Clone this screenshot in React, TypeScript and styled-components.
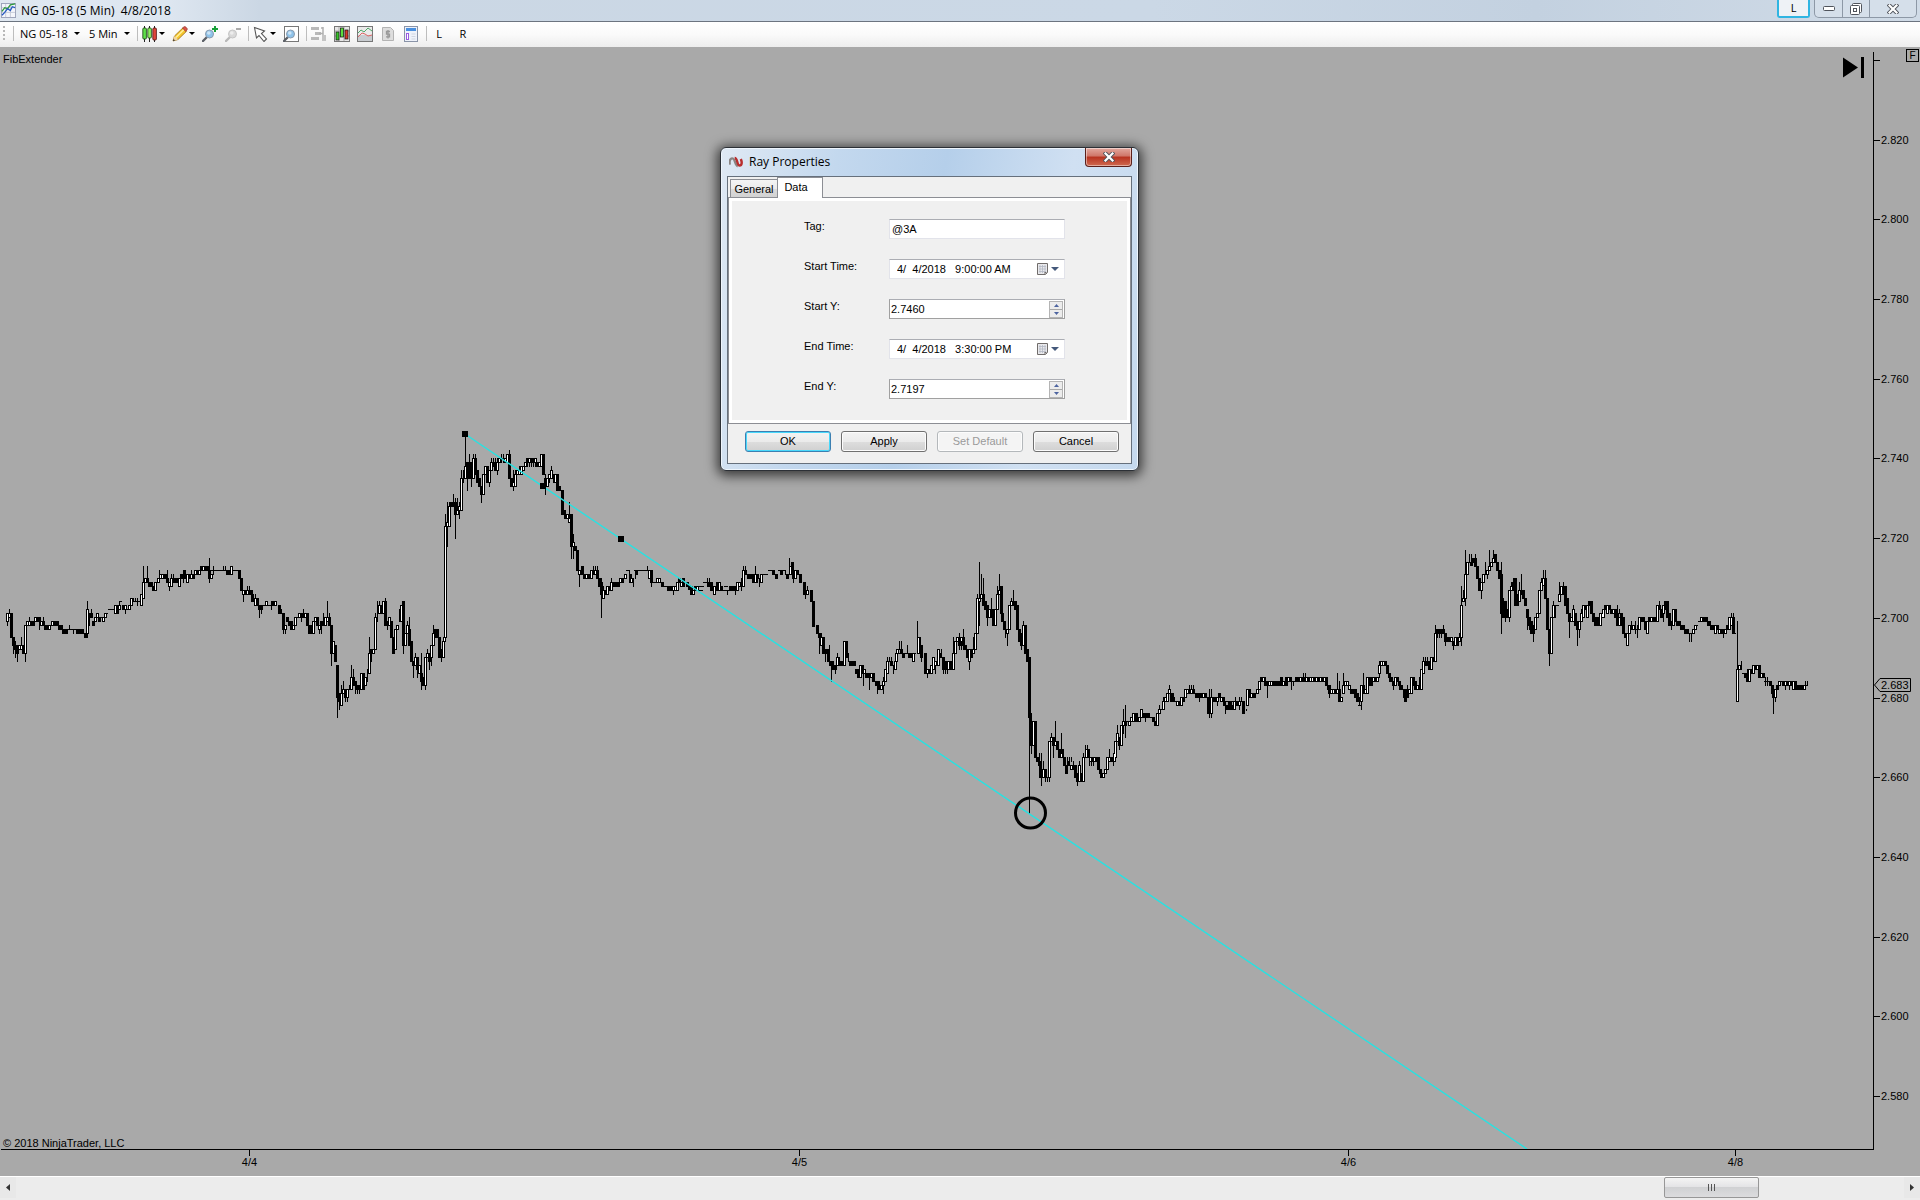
import React from "react";
import styled, { createGlobalStyle } from "styled-components";

const UI_FONT = '"Open Sans", "Noto Sans", sans-serif';
const FORM_FONT = '"Liberation Sans", Arial, sans-serif';

const GlobalStyle = createGlobalStyle`
  *, *::before, *::after { box-sizing: border-box; }
  html, body { margin: 0; }
  body { font-family: ${FORM_FONT}; font-size: 11px; color: #000; overflow: hidden; }
  button, input { font: inherit; color: inherit; margin: 0; }
  svg { display: block; }
`;

/* ---------- price series ----------
   Each block lists its marks on a grid of thirds of a pixel, from its own origin:
   U x,top,bottom        hollow (rising) candle
   D x,top,bottom[,x2]   filled (falling) candle, or a run of them up to x2
   W x,top,bottom        wick
   H x,y,x2              flat bars                                   */
type Block = { x: number; y: number; marks: string };

const BLOCKS: Block[] = [
  {
    x: 0,
    y: 540,
    marks: `U22,220,244 W22,244,255 W28,207,220 U28,220,232 D34,220,292 D40,292,316 W40,316,340 D46,316,328 W46,304,352 D52,328,340 W52,316,364
    U58,316,328 U64,316,328 W64,292,316 D70,316,340 U76,256,340 W76,340,364 U82,244,256 W88,231,244 U88,244,256 D94,244,256,100 U106,232,244
    D112,232,244,118 W118,244,268 U124,244,256 D130,244,256 W130,231,244 D136,256,268,142 U148,256,268 U156,244,256 D160,244,256,172 D178,256,268,184
    H178,268,234 D190,268,280,200 W208,255,268 W220,268,280 D232,268,280,244 W250,268,280 D256,280,292,260 U262,208,280 W262,183,208 D268,220,232,274
    W268,232,256 W274,208,220 D280,244,256 U286,232,244 U292,220,232 D298,232,244 H298,232,316 U310,232,244 U316,220,232 H316,220,326 H326,208,343
    U346,196,220 D352,196,220 U358,196,208 W358,184,196 H358,184,368 D370,196,208 U376,196,208 W376,208,220 H376,208,388 U388,196,208 U394,176,196
    H394,184,424 W400,176,184 W406,176,184 W412,176,196 U424,164,196 U430,128,176 W430,78,128 U436,116,128 D442,116,128 W442,78,116 D448,128,140,454
    D460,140,152 U466,128,152 H466,128,474 U474,116,128 W478,91,104 U480,104,116 U486,104,116 D490,104,116,500 W502,91,116 D502,116,128 U508,128,140
    W508,140,152 U514,116,140 W514,104,116 W520,104,116 D524,116,128,530 U538,116,140 D544,104,116 D553,92,116 W550,116,128 U562,104,128 D568,104,116
    U574,104,116 D580,104,116 W574,91,104 U586,92,104 D592,92,104 U598,92,104 D604,80,92 U610,80,92 D616,80,92,622 D628,92,116 W628,54,128 U634,104,116
    H634,92,682 W640,80,104 W670,78,92 W676,78,92 D682,92,104,690 U694,80,104 H694,92,718 D718,92,116 D724,116,152 U730,152,164 W730,164,185 D736,152,164
    U742,152,164 W742,139,152 W748,139,152 D748,152,164,754 D757,164,184 U766,176,196 W766,162,176 D772,176,196 D778,196,208,784 W778,208,232 W784,208,220
    H784,196,830 U798,184,196 H798,184,806 D816,184,196,820 W814,196,208 U826,184,196 D838,196,220 W844,208,220 D850,220,268 W850,268,280 U856,256,268
    W856,268,280 D862,232,244 D868,244,256 D874,244,268 U880,256,268 U886,232,256 H886,232,898 U898,220,232 D904,220,232,910 W910,207,220 W904,232,244
    U916,220,232 D922,220,256 D928,256,280`,
  },
  {
    x: 310,
    y: 420,
    marks: `D2,616,640 U10,604,640 U16,592,604 D22,592,616 U28,616,628 W28,628,640 W34,604,640 D34,604,616,40 W40,580,604 U46,592,616 W52,544,592 U52,592,604
    W58,580,592 D58,592,616 D64,616,700 W64,700,736 U70,664,700 D76,676,724 D82,736,832 W82,832,892 D88,820,844 W88,844,868 U94,820,856 W94,796,820
    U100,808,820 W100,784,808 D106,808,832 W106,832,844 U112,808,832 W112,832,844 W118,796,808 H112,808,124 U124,772,808 W124,736,772 D130,772,796
    W130,748,772 W136,796,820 D136,784,796 D142,796,808 W142,808,820 W148,796,820 U154,760,808 D160,760,808 U166,772,796 W172,748,784 H166,772,176
    U178,700,760 W178,652,700 D184,688,700 U190,688,700 W184,700,724 U196,592,688 W196,580,592 W202,544,604 H196,592,206 U208,556,580 W208,544,556
    D214,556,580 U220,544,580 D226,544,616 W226,536,544 D232,604,616 W232,616,628 U238,592,616 D244,604,652 D250,652,700 U256,628,688 U262,616,628
    W268,568,604 U274,556,604 D280,544,676 W280,676,700 U286,640,676 U292,616,640 W292,604,616 W298,592,640 D298,628,676 D304,664,724 D310,724,736
    W310,736,772 U316,712,736 W316,700,712 D322,712,748 W322,748,772 U328,736,760 W334,700,760 D334,760,784 W334,784,808 D340,772,796 U346,712,796
    W346,796,808 W352,688,700 U352,700,712 D358,700,724 W358,724,748 U364,676,712 W364,712,736 U370,640,676 W370,616,640 D376,628,652,382 D388,652,712
    D394,688,712 W394,712,724 U400,664,712 U403,652,664 U406,320,652 W406,283,320 U412,308,320 W412,248,380 U418,260,320 W418,248,260 D424,248,260,430
    W430,223,248 D436,248,284 W436,235,356 U442,272,284 W442,235,272 U448,260,272 W448,248,296 U454,176,272 W454,152,176 W460,152,188 U466,140,176
    W466,44,140 D472,128,164 W472,164,212 D478,128,176 W478,103,128 D484,128,176 W484,176,200 U490,116,176 W490,103,116 W496,103,128 D496,116,164
    D502,152,188 D508,176,200 D514,200,224 W514,224,248 U520,164,224 U526,140,164 D532,140,188 U538,152,188 W538,188,200 U544,128,152 W544,116,128
    D550,128,140 W550,116,128 W556,116,128 D556,128,152 U562,128,152 W562,116,164 U568,116,128 H568,116,580 W574,104,128 W580,104,128 U586,116,128
    U592,104,128 W598,91,104 D598,104,176 D604,176,200 U610,188,200 W610,152,212 U616,164,200 W616,152,164 U622,152,164 W628,140,164 U628,152,164
    U634,140,164 U640,140,152 U646,128,140 D652,116,128 U658,116,128 D664,116,128 D670,116,128 U676,116,128 W652,128,140 W658,128,140 W664,128,140
    W670,128,140 W676,128,140 D682,128,140 U688,128,140 U694,104,140 D700,104,164 W706,164,224 D706,176,200 U712,176,200 U718,164,176 W718,176,188
    U724,152,176 W724,139,152 D730,164,176 W730,176,188 U736,164,188 D742,164,212 D748,200,212 D757,212,284 D762,272,284 D766,284,296 U772,284,296
    W778,248,308 U778,296,308 D784,284,380 W784,380,416 U790,368,380 W790,344,416 D796,380,392 D802,392,452 U808,452,464 W808,464,500 D817,440,464
    D823,464,476 U829,464,476 D835,464,476 D841,464,476 U844,452,476 D850,452,464 U856,452,464 W850,440,452 W856,440,452 W862,440,464 D862,452,476
    D868,476,500`,
  },
  {
    x: 600,
    y: 520,
    marks: `D4,188,224 W4,176,293 U10,212,236 W10,200,212 D16,212,224 U22,200,224 D28,200,212 U34,188,212 W34,175,188 D40,188,200,56 U62,176,188 D68,176,188
    U76,164,176 H78,152,88 W88,152,176 D90,164,188 U94,176,188 D98,176,188 W100,188,200 H102,152,160 D110,152,164 W106,164,176 W142,139,152 U148,152,176
    H110,152,154 D154,152,188 W154,188,200 H154,188,190 U172,176,188 U178,176,188 D188,188,200 H188,200,220 D206,200,212,214 U220,200,212 W220,212,224
    U226,200,212 U232,188,212 D238,176,188 U244,188,200 D250,176,200 D262,188,200 D268,196,208 D274,200,224 U280,212,224 D286,200,212 U292,200,212
    H292,212,310 H298,200,314 H310,188,330 W322,176,188 D326,188,200 W328,176,188 D334,188,212 U344,200,224 W352,188,200 D352,188,212 U358,188,212
    D364,200,212 H372,200,386 W382,212,224 H370,212,400 D392,200,212,404 W406,212,224 U412,188,212 U418,188,200 W424,176,212 U430,152,200 W430,139,152
    D436,152,164 W436,139,152 W442,164,176 D448,164,176 D454,164,176 D460,164,188 W466,139,164 U466,164,188 D472,164,176 W472,176,188 U484,164,188
    W478,176,200 H484,164,506 H504,152,524 D520,152,164 D530,164,176 H536,152,560 D544,152,164 W556,152,164 D562,164,176 U570,140,164 W568,115,140
    D576,128,152 W580,128,188 D579,152,176 U586,152,176 D592,152,164 D602,164,188 D614,188,224 W616,224,236 U622,212,224 W622,200,212 D634,212,244
    D640,244,320 D652,316,340 D658,340,352 W658,352,400 W664,340,352 U664,352,376 D670,352,400 D676,388,400 W676,400,424 D686,388,424 W688,376,388
    D692,424,436 D698,424,448 W694,448,484 D706,436,448 W706,448,460 U712,412,436 W712,400,412 W718,412,424 D718,424,436 D724,424,436 U732,364,436
    D738,364,412 W745,400,424 D750,424,436 D756,424,436,762 D768,448,460 D774,448,472 U780,436,472 D786,436,460 W790,460,496 U792,448,460 D798,460,472
    D804,460,472 W808,472,508 D820,460,484 U814,460,472 D828,484,496 D834,484,508 W832,508,520 U844,496,508 W850,472,520 U850,484,496 U856,448,484
    U862,424,460 W862,412,424 W868,412,424 W874,412,424 D874,424,436 W880,436,460 U886,424,448 U889,400,424 H889,400,950 U892,388,400 W898,364,388
    W904,364,400 D904,388,400 D910,400,412 W922,376,400 D928,400,412,936 U940,400,424 U954,352,400 W952,304,352 D958,352,388`,
  },
  {
    x: 920,
    y: 540,
    marks: `W1,292,340 D4,316,352 W4,352,364 D16,340,400 U22,388,400 W22,400,412 D28,388,400 U34,376,400 U40,352,388 W46,376,400 U46,364,376 U54,328,376
    D60,340,352 W64,328,340 D70,352,388 D76,364,388 W70,388,400 W76,388,400 W82,388,400 U84,364,388 D90,364,388 D94,376,388 U100,340,388 U106,304,340
    W100,292,340 U112,292,304 D118,304,316 W118,280,328 U124,292,304 W124,304,328 D130,292,316 W130,268,328 D136,316,328 D142,328,352 U148,328,364
    W148,364,388 D154,328,352 W160,292,328 U160,328,340 U166,280,328 U172,176,280 W172,164,176 W178,66,256 U178,176,184 W184,103,164 W190,115,164
    U184,164,176 D190,164,196 D196,184,208 D202,196,232 W202,232,256 U208,208,232 W214,176,208 D214,208,232 D220,208,256 U226,208,256 U232,164,208
    W232,140,164 W238,103,152 U238,152,164 D244,140,220 D248,220,244 D254,244,268 D260,268,280 W256,280,292 W262,280,316 U262,268,280 U268,196,268
    U274,184,196 W274,176,184 W280,151,184 D280,184,196 D286,184,208 D292,196,268 D298,268,304 W304,316,328 D304,280,316 U310,256,316 W310,244,256
    D316,256,340 D322,328,364 D328,352,532 D332,520,544 W328,540,820 D334,544,616 W334,616,640 U340,544,616 D346,544,652 D352,652,664 D358,664,676
    D361,676,712 W358,640,676 W364,640,736 U370,688,712 W370,664,688 D376,688,712 U382,712,712 W376,712,724 W382,712,724 W388,712,724 U388,604,712
    U394,592,604 W394,580,592 D400,592,616 W400,616,652 W406,544,604 U406,604,616 D412,604,628 D418,628,652 W424,580,628 U424,640,652 D428,628,652
    D434,652,676 D440,676,700 D446,664,676 W442,652,700 W448,652,664 W454,652,664 U454,676,688 D460,676,688 W460,664,676 D466,676,712 D472,700,724
    W472,724,736 U478,676,724 W478,664,676 D484,700,724 W487,664,700 U490,652,724 W490,640,652 U498,628,652 W496,616,628 W502,616,628 D504,628,652
    U510,652,664 H498,652,534 D516,652,664 U522,652,664 D528,652,664 W508,664,676 W514,664,676 W520,652,676 D534,652,688 D540,688,700 D544,700,712
    U550,700,712 U556,688,700 U562,652,688 W568,628,652 U568,652,664 D574,652,664 W580,640,676 U582,640,664 U586,604,652 U592,580,604 W592,556,580
    D598,592,616 W598,616,628 U604,556,616 U610,544,556 W610,508,580 W616,496,592 D616,544,556 U628,544,556 H610,544,640 U634,532,544 U641,520,544
    D648,520,544 D654,532,544 U658,532,544 U665,508,532 D672,520,532 W676,532,544 D678,520,532 D684,520,532 H665,532,700 D700,532,544 D706,544,556
    U712,520,556 U718,508,520 W718,496,508 H718,508,730 U730,484,508 W730,472,484 U736,472,484 U742,460,484 U748,448,460 W748,436,448 D754,460,484
    D760,472,484 W760,460,472 D766,484,484 U772,484,496 D778,484,496`,
  },
  {
    x: 1180,
    y: 640,
    marks: `U4,172,196 D10,172,184 U16,148,172 U22,148,160 W28,136,148 W34,136,148 W40,136,148 D28,148,160 U34,148,160 D40,148,160 H40,160,56 W46,160,172
    D52,160,172,60 W58,172,184 D64,160,172 U70,160,172 D76,160,172 W82,172,184 D86,172,220 W88,148,232 U94,172,220 W94,148,232 D100,172,184,106
    W112,184,196 U112,172,184 D118,160,172 U124,172,184 D130,172,184 D132,184,196 D138,196,208 W136,208,220 H138,184,190 W144,184,208 D150,184,208
    D158,196,208 U163,184,208 W166,172,184 D172,184,196 W178,172,208 W184,172,184 U178,184,196 D190,184,220 W198,208,210 U202,148,196 D208,148,172
    U214,160,172 D220,160,172 W226,160,172 H220,160,232 U232,148,160 U238,124,148 D244,112,124 U250,112,124 D256,124,136 W256,112,124 D262,124,136
    W262,136,172 U268,124,136 U274,124,136 D280,124,136,300 D305,112,136 U310,124,136 D318,112,136 U324,112,124 D330,112,124 H326,124,440 W334,124,148
    W340,124,136 D350,112,124,356 U362,112,124 W370,100,112 W376,100,112 D368,112,124,374 U380,112,124 D386,112,124 U392,112,124 U398,112,124
    D404,112,124 U410,112,124 D416,112,124 U422,112,124 D428,112,124 U432,112,124 D438,112,136 D444,136,148 D448,136,160 W448,160,172 U454,148,160
    U460,148,160 D466,148,160 W472,100,148 U472,148,160 W478,124,148 D478,148,184 U484,172,184 U490,136,160 W490,100,136 U496,124,136 U502,124,136
    U508,136,148 D514,148,160 D520,148,160 D526,148,172 D532,160,184 D538,172,184 H534,196,546 W538,184,196 W544,184,208 U544,136,184 W550,100,136
    D550,136,160 U556,148,160 U562,112,160 D570,112,136 D574,124,136 U580,112,124 D586,112,124 U592,112,124 U598,76,100 W598,64,76 W598,100,112
    U604,64,76 U610,64,76 D616,64,76 D622,76,100 D628,100,112 W628,112,124 D634,112,124 D640,124,136 W640,136,148 U646,112,136 D652,112,124
    D658,124,136 W658,136,148 D664,136,148 W670,148,172 D676,148,184 D682,148,172 W682,136,148 U688,148,160 U694,112,160 D700,112,136 D706,124,148
    U712,136,148 W718,112,148`,
  },
  {
    x: 1420,
    y: 530,
    marks: `U4,418,478 U10,394,430 W10,382,394 W16,382,394 D16,394,406 D22,394,406 W22,382,394 D28,394,418 U34,382,418 D40,382,394 U46,310,394 W46,286,310
    D52,298,310,70 W52,310,322 W58,310,322 W64,310,322 W70,286,298 D76,310,334 W76,334,346 D82,322,334,88 U94,322,334 D100,334,346 W100,346,358
    U106,322,346 D112,322,346 W118,310,322 U118,322,334 U124,226,322 W124,168,226 W124,322,346 W130,180,206 U130,206,214 W136,60,226 U136,134,206
    U142,98,134 W148,72,98 W154,72,98 H142,98,160 D154,98,106 D160,86,98 D166,86,110 W166,72,86 D172,110,146 D178,146,182 U184,158,182 W184,182,206
    U190,134,158 W196,98,134 H190,134,200 U202,122,134 W202,134,146 U208,110,122 W208,60,110 U214,98,110 U220,86,98 W220,60,86 D226,74,98
    D232,98,122 D238,122,146 D244,134,250 W244,98,310 D250,238,262 W250,206,250 D256,214,262 W256,262,274 D262,238,262 U268,182,262 W268,262,274
    U274,170,182 W274,158,170 D280,158,182 W280,146,158 D286,146,226 D292,194,226 U298,182,214 W298,158,182 W304,132,182 D304,182,194 D310,182,206
    D316,206,226 D322,238,262 W322,262,298 D328,262,286 W328,286,298 D334,274,310 D340,286,310 W340,310,334 U346,262,298 U352,250,262 U358,182,250
    U364,158,182 W364,146,158 U370,146,166 W370,122,146 W376,122,146 D376,146,206 D382,206,298 D388,298,370 W388,370,406 U394,262,370 U400,226,262
    W400,214,226 W406,226,262 H400,226,418 U418,194,214 W418,158,194 U424,170,194 W430,158,170 D430,170,194 D436,170,226 D442,206,250 D448,250,274
    W448,274,322 U454,262,274 U460,238,274 W460,226,238 D466,250,286 D472,274,298 W472,298,346 U478,274,298 W478,298,322 U484,250,274 W484,238,250
    U490,226,262 D496,226,238 U502,226,262 D508,214,226 D514,214,250 D520,250,274 D526,262,286 D532,262,286 U541,250,286 U547,250,262 U550,238,262
    D556,226,238 U562,226,250 D568,226,238 D574,238,250 U580,238,250 D586,238,262 W592,226,286 W598,238,250 D592,250,286 U598,262,286 D604,250,286
    D610,262,310 D616,310,322 U622,310,346 U628,286,310 W634,274,298 D634,286,298 U640,286,298 W646,274,310 W652,286,322 H628,298,658 U658,262,298
    D664,262,274,670 D676,274,298 U682,274,310 D688,262,274 U694,262,274 D700,262,274,706 U712,226,274 W718,214,226 D718,226,238 D724,238,262
    W730,250,274 U730,226,250 D736,214,238 D742,214,262 D748,250,286 W754,274,298 U760,238,286 D766,238,274 D772,274,286 D778,274,286 D784,286,298
    D790,286,298 D796,298,310 D802,298,310 W808,310,334 W814,310,334 H802,310,820 U820,298,310 U826,286,298 H826,286,836 H834,274,844 U844,262,274
    D850,262,274,858 D864,274,286 D868,274,286 D874,286,298 D880,286,298 U886,286,310 D892,286,298 U898,298,310 D904,298,310 D910,298,310 W910,310,322
    U916,298,310 D922,286,298 U928,262,298 U934,262,286 W934,250,262 W940,250,262 D940,262,310 H940,310,950 W952,274,418 U952,418,514 U958,406,418
    W964,394,418 H958,418,968 H966,430,976 D976,430,442 D982,430,454 W982,418,430 U988,418,454 D994,418,430 U1000,406,430 D1006,406,418 U1012,406,418
    D1018,406,442 U1024,430,442 D1030,430,442 W1036,442,466 H1032,454,1055 W1042,442,466 D1052,454,466 D1056,466,490 D1060,490,502 W1060,502,550
    U1066,478,502 W1066,502,514 D1072,466,478 U1078,454,466 H1078,454,1130 D1090,454,466 U1096,454,466 W1096,466,478 D1102,454,466 U1108,454,466
    W1108,466,478 D1114,454,466 U1120,454,478 D1126,454,478 D1132,466,478 D1140,466,478,1146 U1152,466,478 W1156,454,466 W1162,454,466 H1150,466,1166`,
  },
];

const PLOT = { top: 47, width: 1873, height: 1102 };

function tracePrices(blocks: Block[]) {
  let solid = "";
  let hollow = "";
  const rect = (x: number, y: number, w: number, h: number) => `M${x} ${y}h${w}v${h}h${-w}z`;
  blocks.forEach((b) => {
    b.marks
      .trim()
      .split(/\s+/)
      .forEach((m) => {
        const n = m.slice(1).split(",").map(Number);
        const px = (v: number) => b.x + Math.floor(v / 3);
        const py = (v: number) => b.y - PLOT.top + Math.floor(v / 3);
        const x = px(n[0]);
        const y = py(n[1]);
        if (m[0] === "H") {
          solid += rect(x, y, px(n[2]) - x, 1);
          return;
        }
        const h = py(n[2]) - y + 1;
        if (m[0] === "W") solid += rect(x, y, 1, h);
        else if (m[0] === "D") solid += rect(x - 1, y, px(n[3] ?? n[0]) - x + 3, h);
        else {
          solid += rect(x - 1, y, 3, h);
          if (h > 2) hollow += rect(x, y + 1, 1, h - 2);
        }
      });
  });
  return { solid, hollow };
}

const SERIES = tracePrices(BLOCKS);

/* ---------- shell ---------- */
const Shell = styled.div`
  display: flex;
  flex-direction: column;
  height: 100vh;
  background: #a9a9a9;
`;

const TitleBar = styled.header`
  display: flex;
  align-items: flex-start;
  height: 22px;
  padding: 0 3px 0 1px;
  border-bottom: 1px solid #6c7480;
  background: linear-gradient(90deg, #e0e8f1 0, #dde6f0 170px, #cbd7e4 260px, #cbd8e6 60%, #c3d1e0 80%, #d0dbe7 100%);
`;

const WindowTitle = styled.h1`
  flex: 1;
  margin: 0;
  padding-left: 5px;
  font: 400 12px/21px ${UI_FONT};
  white-space: pre;
`;

const TitleIcon = styled.span`
  padding-top: 3px;
`;

const LinkButton = styled.button`
  width: 33px;
  height: 18px;
  margin-right: 4px;
  padding: 0;
  border: 2px solid #2fb5e2;
  border-top: 0;
  border-radius: 0 0 3px 3px;
  background: #eef2f6;
  font: 400 11px/14px ${UI_FONT};
`;

const Controls = styled.div`
  display: flex;
  height: 18px;
  border: 1px solid #8d98a6;
  border-top: 0;
  border-radius: 0 0 5px 5px;
  background: #d5dfea;
`;

const ControlButton = styled.button<{ $wide?: boolean }>`
  display: grid;
  place-items: center;
  width: ${(p) => (p.$wide ? 47 : 27)}px;
  padding: 0;
  border: 0;
  background: none;
  & + & { border-left: 1px solid #8d98a6; }
`;

const Toolbar = styled.nav`
  display: flex;
  align-items: center;
  height: 25px;
  padding-bottom: 2px;
  background: linear-gradient(#fff, #fafafa 50%, #ededed);
  font: 400 11px/16px ${UI_FONT};
`;

const Grip = styled.span`
  width: 2px;
  height: 15px;
  margin: 0 8px 0 3px;
  background: repeating-linear-gradient(#b8b8b8 0 2px, transparent 2px 4px);
`;

const Separator = styled.span`
  width: 1px;
  height: 15px;
  margin-left: 4px;
  background: #bdbdbd;
  ${Grip} + & { margin-left: 0; }
`;

const Tool = styled.button<{ $w: number }>`
  display: flex;
  align-items: center;
  justify-content: space-between;
  width: ${(p) => p.$w}px;
  height: 22px;
  padding: 0 3px 0 4px;
  border: 0;
  background: none;
  white-space: nowrap;
`;

const TextTool = styled(Tool)`
  padding-left: 6px;
`;

const LetterTool = styled(Tool)`
  justify-content: center;
  padding: 0;
`;

const Caret = styled.span`
  border: 3px solid transparent;
  border-top-color: #000;
  border-bottom: 0;
`;

/* ---------- chart ---------- */
const Chart = styled.main`
  position: relative;
  flex: 1;
  min-height: 0;
  display: grid;
  grid-template-columns: 1fr 47px;
  grid-template-rows: 1fr 27px;
`;

const Plot = styled.section`
  position: relative;
  min-height: 0;
  overflow: hidden;
`;

const PlotSvg = styled.svg`
  position: absolute;
  inset: 0;
  width: 100%;
  height: 100%;
`;

const PlotText = styled.div<{ $end?: boolean }>`
  position: absolute;
  left: 3px;
  ${(p) => (p.$end ? "bottom: 0;" : "top: 6px;")}
  line-height: ${(p) => (p.$end ? 12 : 13)}px;
`;

const JumpButton = styled.button`
  position: absolute;
  top: 10px;
  right: 8px;
  padding: 0;
  border: 0;
  background: none;
`;

const PriceAxis = styled.aside`
  position: relative;
  display: flex;
  flex-direction: column;
  padding: 7px 0 6px;
  &::before {
    content: "";
    position: absolute;
    top: 5px;
    bottom: -1px;
    left: 0;
    width: 1px;
    background: #000;
  }
`;

const PriceRow = styled.div<{ $last?: boolean }>`
  flex: ${(p) => (p.$last ? 2 : 3)} 0 0;
  min-height: 0;
  display: flex;
  align-items: flex-start;
  gap: 1px;
  line-height: 12px;
  &::before {
    content: "";
    width: 7px;
    height: 1px;
    margin-top: 6px;
    background: #000;
  }
`;

const LastPrice = styled.div`
  position: absolute;
  top: 631px;
  left: 1px;
  width: 37px;
  padding-left: 7px;
  line-height: 14px;
  svg { position: absolute; inset: 0; }
  span { position: relative; }
`;

const FixedButton = styled.button`
  position: absolute;
  top: 2px;
  right: 1px;
  width: 13px;
  height: 13px;
  padding: 0;
  border: 1px solid #000;
  background: none;
  font-size: 10px;
  line-height: 11px;
`;

const TimeAxis = styled.div`
  grid-column: 1 / -1;
  display: grid;
  grid-template-columns: 234fr 550fr 549fr 387fr 200fr;
  position: relative;
  &::before {
    content: "";
    position: absolute;
    top: 0;
    left: 1px;
    right: 46px;
    height: 1px;
    background: #000;
  }
`;

const TimeMark = styled.div`
  width: 31px;
  text-align: center;
  line-height: 13px;
  &::before {
    content: "";
    display: block;
    width: 1px;
    height: 6px;
    margin: 1px auto 0;
    background: #000;
  }
`;

/* ---------- scroll bar ---------- */
const ScrollBar = styled.footer`
  display: grid;
  grid-template-columns: 16px 1648fr 95px 145fr 16px;
  height: 24px;
  padding-bottom: 2px;
  border-top: 1px solid #fff;
  background: #ececec;
`;

const ScrollButton = styled.button`
  display: grid;
  place-items: center;
  padding: 0;
  border: 0;
  background: #e8e8e8;
`;

const ScrollThumb = styled.button`
  grid-column: 3;
  display: grid;
  place-items: center;
  padding: 0 0 1px;
  border: 1px solid #979797;
  border-radius: 2px;
  background: linear-gradient(#f4f4f4, #e4e4e6 45%, #d0d1d3 50%, #dcdcde);
  & + button { grid-column: 5; }
`;

/* ---------- dialog ---------- */
const Dialog = styled.form`
  position: absolute;
  top: 147px;
  left: 720px;
  width: 419px;
  padding: 0 6px 6px;
  border: 1px solid #2c3036;
  border-radius: 6px;
  background: linear-gradient(100deg, #dfe9f4 0, #c3d8ee 25%, #b5cfea 48%, #d0e0f2 75%, #c5d9ee 100%);
  box-shadow: inset 0 0 0 1px #eef5fc, 0 2px 12px 3px rgba(0, 0, 0, 0.65);
`;

const DialogHead = styled.header`
  display: flex;
  align-items: flex-start;
  height: 28px;
`;

const DialogTitle = styled.h2`
  flex: 1;
  display: flex;
  align-items: center;
  gap: 6px;
  margin: 0;
  padding-left: 2px;
  font: 400 12px/28px ${UI_FONT};
`;

const CloseButton = styled.button`
  display: grid;
  place-items: center;
  width: 47px;
  height: 19px;
  padding: 0;
  border: 1px solid #5b1f1a;
  border-top: 0;
  border-radius: 0 0 4px 4px;
  background: linear-gradient(#e3a99f, #cf7568 45%, #b8321f 50%, #cf6a50);
  box-shadow: inset 0 0 0 1px rgba(255, 255, 255, 0.45);
`;

const DialogBody = styled.div`
  border: 1px solid #66707c;
  background: #f0f0f0;
`;

const Tabs = styled.div`
  display: flex;
  align-items: flex-end;
  height: 20px;
  padding-left: 2px;
`;

const Tab = styled.button<{ $active?: boolean }>`
  position: relative;
  width: ${(p) => (p.$active ? 46 : 47)}px;
  height: ${(p) => (p.$active ? 21 : 18)}px;
  margin-bottom: ${(p) => (p.$active ? -1 : 0)}px;
  padding: ${(p) => (p.$active ? "0 8px 2px 0" : "0")};
  border: 1px solid #8c8e94;
  border-bottom: 0;
  ${(p) => !p.$active && "border-right: 0;"}
  background: ${(p) => (p.$active ? "#fff" : "linear-gradient(#f4f4f4, #ebebeb 50%, #dadada 55%, #d2d2d2)")};
`;

const TabPanel = styled.div`
  padding: 21px 65px 24px 74px;
  border: 1px solid #8c8e94;
  background: #f0f0f0;
  box-shadow: inset 0 0 0 3px #fff;
`;

const Field = styled.div`
  display: grid;
  grid-template-columns: 1fr 176px;
  height: 20px;
  & + & { margin-top: 20px; }
`;

const Label = styled.label`
  padding-left: 1px;
  line-height: 14px;
`;

const Box = styled.div<{ $spin?: boolean }>`
  display: flex;
  align-items: center;
  border: 1px solid ${(p) => (p.$spin ? "#a0a0a0" : "#e2e3ea")};
  border-top-color: #abadb3;
  background: #fff;
`;

const TextInput = styled.input<{ $inset: number }>`
  flex: 1;
  min-width: 0;
  height: 18px;
  padding: 0 0 1px ${(p) => p.$inset}px;
  border: 0;
  outline: 0;
  background: none;
`;

const PickerButton = styled.button`
  display: flex;
  align-items: center;
  gap: 3px;
  padding: 0 5px 0 0;
  border: 0;
  background: none;
`;

const PickerCaret = styled(Caret)`
  border-width: 4px 4px 0;
  border-top-color: #44597b;
`;

const Spinner = styled.div`
  display: flex;
  flex-direction: column;
  width: 14px;
  margin-right: 1px;
  border: 1px solid #b4b4b4;
`;

const SpinButton = styled.button`
  display: grid;
  place-items: center;
  height: 7px;
  padding: 0;
  border: 0;
  background: #ececec;
  & + & { border-top: 1px solid #a8a8a8; height: 8px; }
`;

const Actions = styled.div`
  display: flex;
  gap: 10px;
  padding: 7px 12px 11px 17px;
`;

const ActionButton = styled.button<{ $primary?: boolean }>`
  width: 86px;
  height: 21px;
  padding: 0 0 1px;
  border: 1px solid ${(p) => (p.$primary ? "#3c7fb1" : "#707070")};
  border-radius: 3px;
  background: linear-gradient(#f3f3f3, #ebebeb 50%, #dddddd 52%, #d0d0d0);
  box-shadow: inset 0 0 0 1px ${(p) => (p.$primary ? "#48d8fb" : "#fcfcfc")};
  &:disabled {
    border-color: #b4b8bb;
    background: #f4f4f4;
    color: #9a9a9a;
  }
`;

/* ---------- icons ---------- */
const Icon = ({ children, size = 16 }: { children: React.ReactNode; size?: number }) => (
  <svg width={size} height={size} viewBox="0 0 16 16" aria-hidden="true">
    {children}
  </svg>
);

const ChartIcon = () => (
  <Icon size={15}>
    <rect x=".5" y=".5" width="15" height="15" fill="#f4f6fb" stroke="#9aa2b8" />
    <path d="M1 5h14M1 10h14M5 1v14M10 1v14" stroke="#c5cad8" />
    <path d="M1 9l3-4 3 1 3-4 5-1" fill="none" stroke="#2e9a3c" strokeWidth="1.4" />
    <path d="M1 13l3-3 3-4 3 2 2-4 3 1" fill="none" stroke="#2458c0" strokeWidth="1.4" />
  </Icon>
);

const CandleIcon = () => (
  <Icon>
    <path d="M2.5 0v16M7.5 0v16M12.5 0v16" stroke="#222" />
    <rect x=".8" y="2" width="3.6" height="11" rx="1" fill="#5fe04a" stroke="#173d10" strokeWidth=".8" />
    <rect x="5.8" y="2" width="3.6" height="10" rx="1" fill="#8df060" stroke="#173d10" strokeWidth=".8" />
    <rect x="10.8" y="2" width="3.6" height="12" rx="1" fill="#e0463a" stroke="#4a1010" strokeWidth=".8" />
  </Icon>
);

const PencilIcon = () => (
  <Icon>
    <path d="M1 15l1.5-5L11 1.800l3.500 3.500L6 13.500z" fill="#f5c62b" stroke="#9a6b14" strokeWidth=".8" />
    <path d="M4 11.500L12 3.500" stroke="#fff0a0" strokeWidth="1.400" />
    <path d="M10.500 2L12 .8q1-.6 2 .4l1 1q.8 1-.2 2L13.700 5.500z" fill="#d9564a" stroke="#8a2c24" strokeWidth=".6" />
    <path d="M1 15l1.500-5 3.500 3.500z" fill="#efd6a8" />
    <path d="M1 15l.6-2 1.400 1.400z" fill="#222" />
  </Icon>
);

const Lens = ({ faded }: { faded?: boolean }) => (
  <g opacity={faded ? 0.65 : 1}>
    <path d="M1 15l4.500-4.500" stroke={faded ? "#999" : "#5b5f66"} strokeWidth="2.400" strokeLinecap="round" />
    <circle cx="7.500" cy="8" r="4" fill={faded ? "#c9c9c9" : "#8fc3ea"} stroke={faded ? "#aaa" : "#8b9cae"} />
    <circle cx="6.800" cy="7" r="1.800" fill="#fff" opacity=".55" />
  </g>
);

const ZoomIcon = ({ out }: { out?: boolean }) => (
  <Icon>
    <Lens faded={out} />
    <path d={out ? "M11 3h5" : "M10 3h6M13 0v6"} stroke={out ? "#aaa" : "#18a038"} strokeWidth="2" />
  </Icon>
);

const CursorIcon = () => (
  <Icon>
    <path d="M1.500 1.500l2 10.500 2.500-2.500L11 15.500l2.500-2.500-5-5.500L11.500 5z" fill="#fff" stroke="#555" strokeWidth="1.100" />
  </Icon>
);

const PageLensIcon = () => (
  <Icon>
    <rect x="1.500" y=".5" width="14" height="15" fill="#fff" stroke="#777" />
    <Lens />
  </Icon>
);

const TraderIcon = () => (
  <Icon>
    <path d="M0 1h8v3H0zM4 6h6v3H4zM0 11h8v3H0z" fill="#b9b9b9" />
    <path d="M10 2h2v12M12 7.500H8M12 1v14" fill="none" stroke="#b0b0b0" strokeWidth="1.500" />
    <path d="M11 9h4v6h-4z" fill="#c4c4c4" />
  </Icon>
);

const BarsIcon = () => (
  <Icon>
    <rect x=".5" y=".5" width="15" height="15" fill="#e6e6e6" stroke="#777" />
    <path d="M1 5h14M1 10h14M5 1v14M10 1v14" stroke="#aaa" />
    <rect x="2" y="6" width="3" height="8" fill="#38c42a" stroke="#111" strokeWidth=".7" />
    <rect x="6.500" y="2" width="3" height="9" fill="#5ade3c" stroke="#111" strokeWidth=".7" />
    <rect x="11" y="4" width="3" height="9" fill="#d8392c" stroke="#111" strokeWidth=".7" />
  </Icon>
);

const IndicatorIcon = () => (
  <Icon>
    <rect x=".5" y=".5" width="15" height="15" fill="#ebebeb" stroke="#777" />
    <path d="M1 9h14v6H1z" fill="#c8ccd0" />
    <path d="M1 7l3-3 3 2 4-4 4 3" fill="none" stroke="#50a86a" />
    <path d="M1 11l4-4 3 1 3 2 4-1" fill="none" stroke="#d66" />
  </Icon>
);

const StrategyIcon = () => (
  <Icon>
    <path d="M2.500 1.500h8l3 3v10h-11z" fill="#ddd" stroke="#b3b3b3" />
    <path d="M10 5.500H6.500v2.700h3v2.700H6M8 4v8.500" fill="none" stroke="#999" strokeWidth="1.300" />
  </Icon>
);

const PropertiesIcon = () => (
  <Icon>
    <rect x="1.500" y=".5" width="13" height="15" fill="#eef2fa" stroke="#8a94a8" />
    <path d="M3 2h10v3H3z" fill="#4a90e0" />
    <rect x="3.500" y="7.500" width="2" height="6" fill="#fff" stroke="#9a5be0" />
    <path d="M8.500 8h4M8.500 10.500h4M8.500 13h4" stroke="#d0d6e2" />
  </Icon>
);

const NinjaIcon = () => (
  <Icon size={14}>
    <path d="M1 11C0 6 2 3 4.500 4S7 12 10 13" fill="none" stroke="#8a8482" strokeWidth="2.600" />
    <path d="M6.500 3.500c3.500 0 2.500 8.500 5.500 8.500S15 8 13.500 4.500" fill="none" stroke="#b92e2e" strokeWidth="2.800" />
  </Icon>
);

const CrossIcon = () => (
  <svg width="12" height="10" viewBox="0 0 12 10" aria-hidden="true">
    <path d="M2.500 1.500l7 7M9.500 1.500l-7 7" stroke="#50545c" strokeWidth="4" strokeLinecap="square" />
    <path d="M2.500 1.500l7 7M9.500 1.500l-7 7" stroke="#fff" strokeWidth="2.200" strokeLinecap="square" />
  </svg>
);

const CalendarIcon = () => (
  <svg width="11" height="12" viewBox="0 0 11 12" aria-hidden="true">
    <path d="M.5.500h10v9l-2 2h-8z" fill="#e9e9ec" stroke="#706c6a" />
    <path d="M2 3.500h7M2 6h7M2 8.500h7M3 2v8M5.500 2v8M8 2v8" stroke="#b3b8c4" strokeWidth=".8" />
    <path d="M10 9l-2.500 2.500V9z" fill="#706c6a" />
  </svg>
);

const Arrow = ({ d, fill = "#4d64a0" }: { d: string; fill?: string }) => (
  <svg width="5" height="3" viewBox="0 0 5 3" aria-hidden="true">
    <path d={d} fill={fill} />
  </svg>
);

/* ---------- pieces ---------- */
const PRICES = ["", "2.820", "2.800", "2.780", "2.760", "2.740", "2.720", "2.700", "2.680", "2.660", "2.640", "2.620", "2.600", "2.580"];
const DATES = ["4/4", "4/5", "4/6", "4/8"];
const HANDLES = [
  [465, 434],
  [543, 486],
  [621, 539],
];

function PriceChart() {
  return (
    <Chart>
      <Plot aria-label="Price chart">
        <PlotSvg viewBox={`0 0 ${PLOT.width} ${PLOT.height}`} preserveAspectRatio="none">
          <g shapeRendering="crispEdges">
            <path d={SERIES.solid} fill="#000" />
            <path d={SERIES.hollow} fill="#fff" />
          </g>
          <line x1="465" y1="387" x2="1527" y2="1102" stroke="#28e2e2" strokeWidth="1.400" />
          {HANDLES.map(([x, y]) => (
            <rect key={x} x={x - 3} y={y - PLOT.top - 3} width="6" height="6" />
          ))}
          <circle cx="1030.500" cy="766" r="15" fill="none" stroke="#000" strokeWidth="3" />
        </PlotSvg>
        <PlotText>FibExtender</PlotText>
        <PlotText $end>© 2018 NinjaTrader, LLC</PlotText>
        <JumpButton type="button" aria-label="Jump to latest bar">
          <svg width="22" height="21" viewBox="0 0 22 21" aria-hidden="true">
            <path d="M0 0.500L15 10.500 0 20.500zM18 0h3v21h-3z" />
          </svg>
        </JumpButton>
      </Plot>
      <PriceAxis>
        {PRICES.map((p, i) => (
          <PriceRow key={i} $last={i === PRICES.length - 1}>
            {p}
          </PriceRow>
        ))}
        <LastPrice>
          <svg width="37" height="15" viewBox="0 0 37 15" aria-hidden="true">
            <path d="M.5 7L6 .5h30.500v13H6z" fill="#a9a9a9" stroke="#000" />
          </svg>
          <span>2.683</span>
        </LastPrice>
        <FixedButton type="button">F</FixedButton>
      </PriceAxis>
      <TimeAxis>
        <span />
        {DATES.map((d) => (
          <TimeMark key={d}>{d}</TimeMark>
        ))}
      </TimeAxis>
    </Chart>
  );
}

function DateField({ id, label, value }: { id: string; label: string; value: string }) {
  return (
    <Field>
      <Label htmlFor={id}>{label}</Label>
      <Box>
        <TextInput id={id} $inset={7} defaultValue={value} />
        <PickerButton type="button" aria-label="Open calendar">
          <CalendarIcon />
          <PickerCaret />
        </PickerButton>
      </Box>
    </Field>
  );
}

function NumberField({ id, label, value }: { id: string; label: string; value: string }) {
  return (
    <Field>
      <Label htmlFor={id}>{label}</Label>
      <Box $spin>
        <TextInput id={id} $inset={1} defaultValue={value} />
        <Spinner>
          <SpinButton type="button" aria-label="Increase">
            <Arrow d="M0 3L2.500 0 5 3z" />
          </SpinButton>
          <SpinButton type="button" aria-label="Decrease">
            <Arrow d="M0 0h5L2.500 3z" />
          </SpinButton>
        </Spinner>
      </Box>
    </Field>
  );
}

function RayDialog() {
  return (
    <Dialog role="dialog" aria-labelledby="ray-title" onSubmit={(e) => e.preventDefault()}>
      <DialogHead>
        <DialogTitle id="ray-title">
          <NinjaIcon />
          Ray Properties
        </DialogTitle>
        <CloseButton type="button" aria-label="Close">
          <CrossIcon />
        </CloseButton>
      </DialogHead>
      <DialogBody>
        <Tabs role="tablist">
          <Tab type="button" role="tab">General</Tab>
          <Tab type="button" role="tab" aria-selected $active>Data</Tab>
        </Tabs>
        <TabPanel role="tabpanel">
          <Field>
            <Label htmlFor="tag">Tag:</Label>
            <Box>
              <TextInput id="tag" $inset={2} defaultValue="@3A" />
            </Box>
          </Field>
          <DateField id="start-time" label="Start Time:" value="4/  4/2018   9:00:00 AM" />
          <NumberField id="start-y" label="Start Y:" value="2.7460" />
          <DateField id="end-time" label="End Time:" value="4/  4/2018   3:30:00 PM" />
          <NumberField id="end-y" label="End Y:" value="2.7197" />
        </TabPanel>
        <Actions>
          <ActionButton $primary>OK</ActionButton>
          <ActionButton type="button">Apply</ActionButton>
          <ActionButton type="button" disabled>Set Default</ActionButton>
          <ActionButton type="button">Cancel</ActionButton>
        </Actions>
      </DialogBody>
    </Dialog>
  );
}

const IconTool = ({ label, menu, children }: { label: string; menu?: boolean; children: React.ReactNode }) => (
  <Tool type="button" aria-label={label} $w={menu ? 30 : 23}>
    {children}
    {menu && <Caret />}
  </Tool>
);

export default function App() {
  return (
    <Shell>
      <GlobalStyle />
      <TitleBar>
        <TitleIcon>
          <ChartIcon />
        </TitleIcon>
        <WindowTitle>{"NG 05-18 (5 Min)  4/8/2018"}</WindowTitle>
        <LinkButton type="button">L</LinkButton>
        <Controls>
          <ControlButton type="button" aria-label="Minimize">
            <svg width="12" height="5" viewBox="0 0 12 5" aria-hidden="true">
              <rect x=".5" y=".5" width="11" height="4" rx="1" fill="#fff" stroke="#50545c" />
            </svg>
          </ControlButton>
          <ControlButton type="button" aria-label="Restore">
            <svg width="12" height="12" viewBox="0 0 12 12" aria-hidden="true">
              <rect x="2.500" y=".5" width="9" height="9" rx="1" fill="#fff" stroke="#50545c" />
              <rect x=".5" y="2.500" width="9" height="9" rx="1" fill="#fff" stroke="#50545c" />
              <rect x="3.500" y="5.500" width="3" height="3" fill="#fff" stroke="#50545c" />
            </svg>
          </ControlButton>
          <ControlButton type="button" aria-label="Close window" $wide>
            <CrossIcon />
          </ControlButton>
        </Controls>
      </TitleBar>
      <Toolbar>
        <Grip />
        <Separator />
        <TextTool type="button" $w={69}>
          NG 05-18 <Caret />
        </TextTool>
        <TextTool type="button" $w={50}>
          5 Min <Caret />
        </TextTool>
        <Separator />
        <IconTool label="Chart style" menu><CandleIcon /></IconTool>
        <IconTool label="Drawing tools" menu><PencilIcon /></IconTool>
        <IconTool label="Zoom in"><ZoomIcon /></IconTool>
        <IconTool label="Zoom out"><ZoomIcon out /></IconTool>
        <Separator />
        <IconTool label="Cursor" menu><CursorIcon /></IconTool>
        <IconTool label="Zoom frame"><PageLensIcon /></IconTool>
        <Separator />
        <IconTool label="Chart trader"><TraderIcon /></IconTool>
        <IconTool label="Data series"><BarsIcon /></IconTool>
        <IconTool label="Indicators"><IndicatorIcon /></IconTool>
        <IconTool label="Strategies"><StrategyIcon /></IconTool>
        <IconTool label="Properties"><PropertiesIcon /></IconTool>
        <Separator />
        <LetterTool type="button" $w={24}>L</LetterTool>
        <LetterTool type="button" $w={24}>R</LetterTool>
      </Toolbar>
      <PriceChart />
      <ScrollBar>
        <ScrollButton type="button" aria-label="Scroll left">
          <svg width="4" height="7" viewBox="0 0 4 7" aria-hidden="true"><path d="M4 0v7L0 3.500z" fill="#333" /></svg>
        </ScrollButton>
        <ScrollThumb type="button" aria-label="Scroll position">
          <svg width="8" height="7" viewBox="0 0 8 7" aria-hidden="true">
            <path d="M.500 0v7M3.500 0v7M6.500 0v7" stroke="#555" />
          </svg>
        </ScrollThumb>
        <ScrollButton type="button" aria-label="Scroll right">
          <svg width="4" height="7" viewBox="0 0 4 7" aria-hidden="true"><path d="M0 0v7l4-3.500z" fill="#333" /></svg>
        </ScrollButton>
      </ScrollBar>
      <RayDialog />
    </Shell>
  );
}
